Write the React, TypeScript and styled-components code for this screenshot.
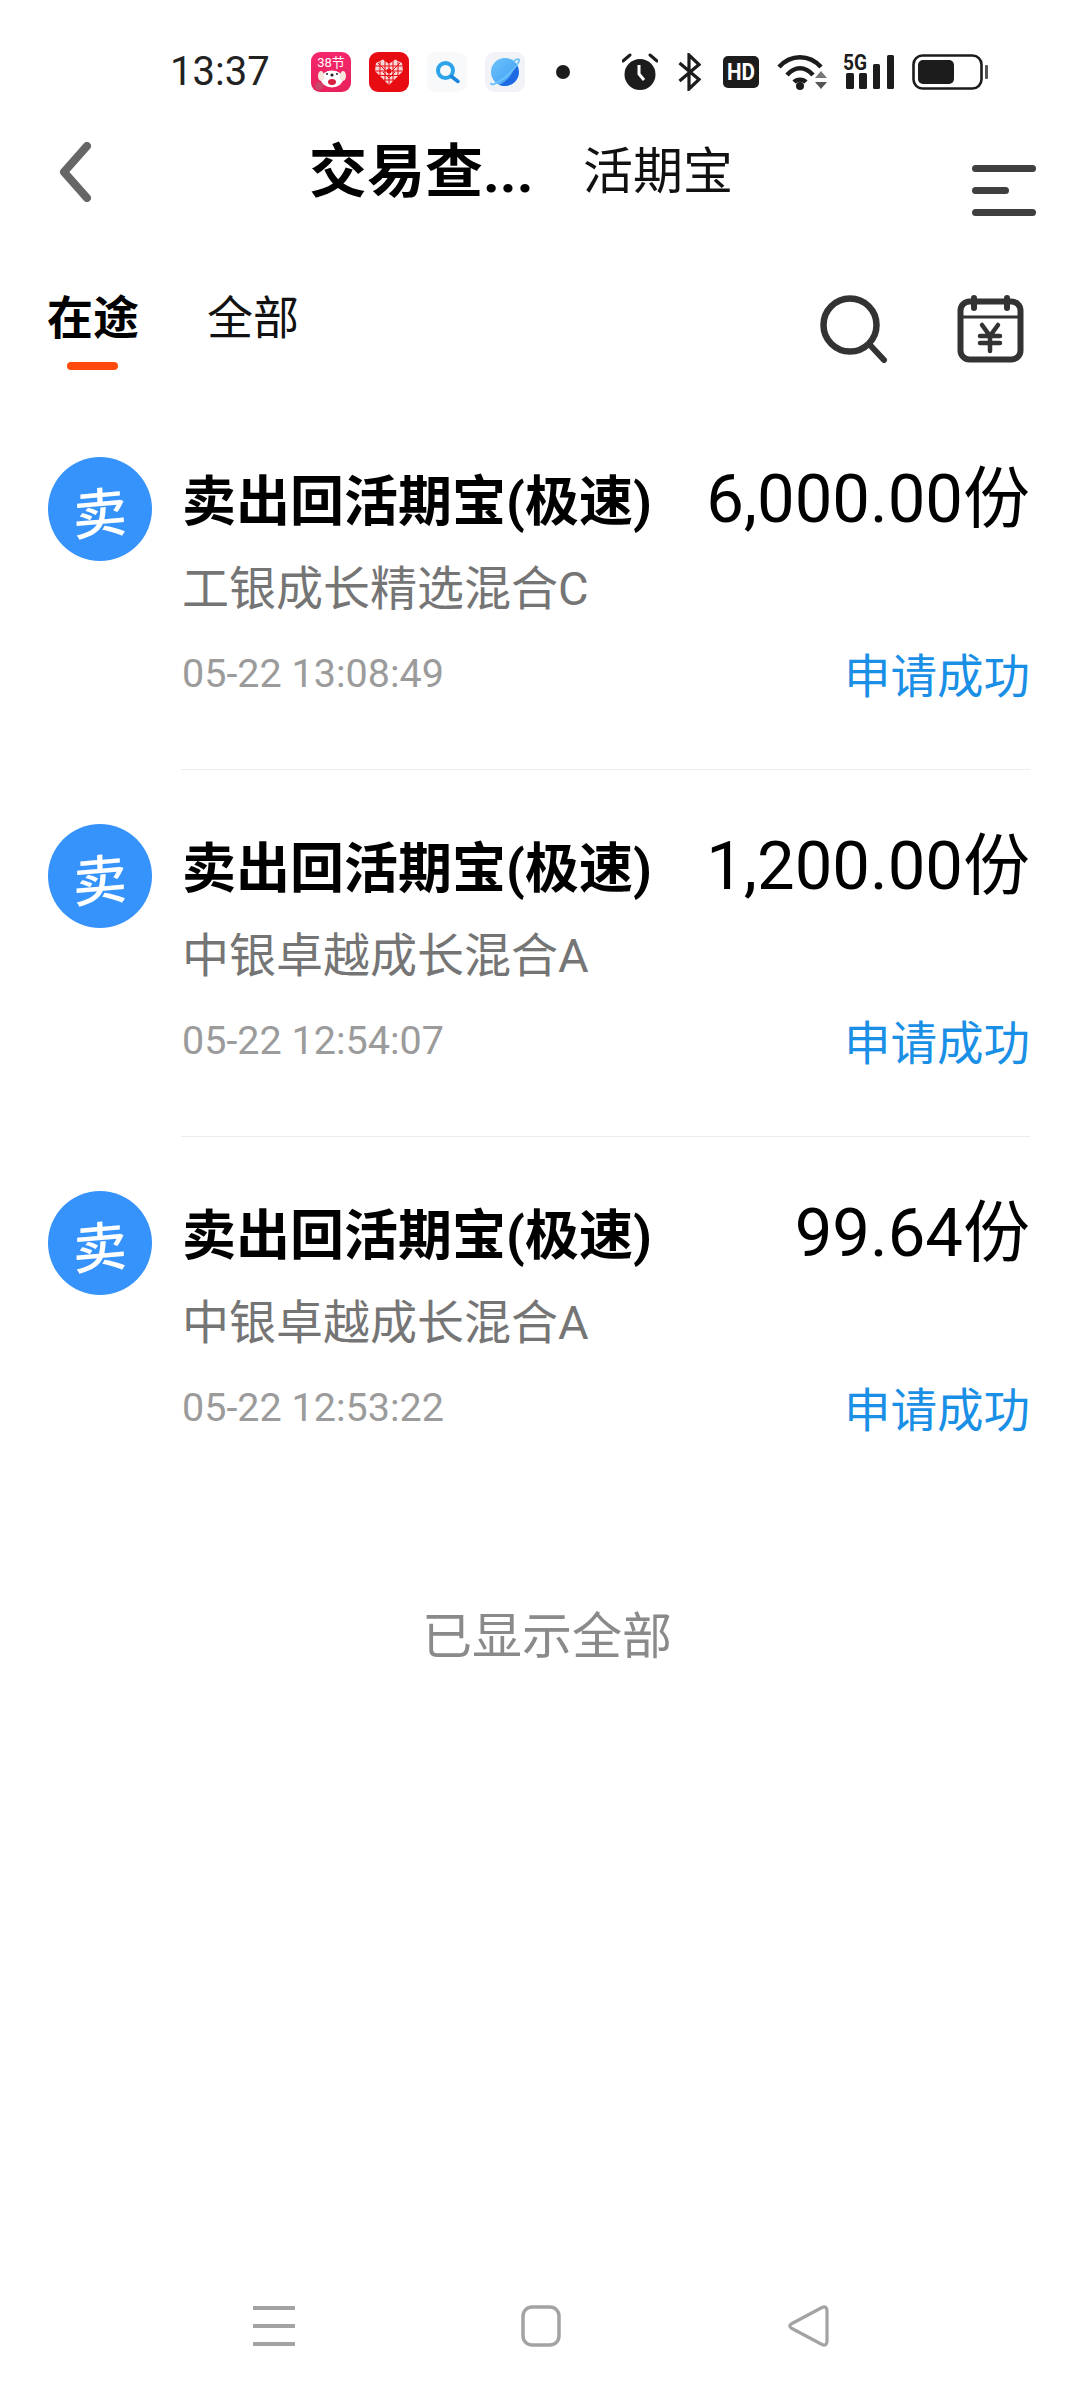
import React from 'react';
import styled, { createGlobalStyle } from 'styled-components';

const GlobalStyle = createGlobalStyle`
  html, body {
    margin: 0;
    padding: 0;
    background: #fff;
  }
  body {
    font-family: Roboto, "Noto Sans CJK SC", sans-serif;
  }
`;

const Page = styled.div`
  width: 1080px;
  min-height: 2400px;
  display: flex;
  flex-direction: column;
  background: #fff;
  color: #000;
`;

const StatusBar = styled.div`
  height: 40px;
  padding: 52px 0 22px 170px;
  display: flex;
  align-items: center;
`;

const Clock = styled.span`
  width: 141px;
  font-size: 40px;
  line-height: 40px;
  color: #222;
  white-space: nowrap;
`;

const AppIcons = styled.div`
  display: flex;
  align-items: center;
  gap: 18px;
  flex: none;
  width: 259px;

  svg {
    flex: none;
  }
`;

const NoticeDot = styled.span`
  width: 14px;
  height: 14px;
  border-radius: 50%;
  background: #1c1c1c;
  margin-left: 13px;
`;

const SystemIcons = styled.div`
  margin-left: 52px;
  display: flex;
  align-items: center;
`;

const SystemIcon = styled.svg<{ $left?: number }>`
  display: block;
  flex: none;
  margin-left: ${(p) => p.$left ?? 0}px;
`;

const NavBar = styled.div`
  height: 116px;
  padding-left: 56px;
  display: flex;
  align-items: center;
  position: relative;
`;

const BackIcon = styled.svg`
  display: block;
  width: 38px;
  height: 60px;
`;

const NavTitle = styled.h1`
  margin: 0 0 0 215px;
  width: 274px;
  font-size: 58px;
  line-height: 70px;
  font-weight: 700;
  white-space: nowrap;
`;

const NavSubtitle = styled.span`
  font-size: 50px;
  line-height: 70px;
  color: #111;
`;

const MenuButton = styled.div`
  margin-left: auto;
  margin-right: 44px;
  margin-top: 36px;
  width: 64px;
  display: flex;
  flex-direction: column;
  gap: 15px;
`;

const MenuLine = styled.span<{ $short?: boolean }>`
  height: 7px;
  border-radius: 3.5px;
  background: #3f3f3f;
  width: ${(p) => (p.$short ? '37px' : '64px')};
`;

const TabBar = styled.div`
  height: 173px;
  padding-left: 47px;
  display: flex;
  align-items: flex-start;
`;

const Tab = styled.div<{ $active?: boolean }>`
  position: relative;
  width: 92px;
  margin-right: 68px;
  margin-top: 60px;
  font-size: 46px;
  line-height: 56px;
  white-space: nowrap;
  font-weight: ${(p) => (p.$active ? 700 : 400)};
  color: ${(p) => (p.$active ? '#000' : '#111')};
`;

const TabMark = styled.span`
  position: absolute;
  left: 20px;
  top: 72px;
  width: 51px;
  height: 8px;
  border-radius: 4px;
  background: #ff4a0c;
`;

const TabTools = styled.div`
  margin-left: auto;
  margin-right: 56px;
  margin-top: 65px;
  display: flex;
  gap: 68px;
`;

const ToolIcon = styled.svg`
  display: block;
  width: 68px;
  height: 68px;
`;

const List = styled.div`
  display: flex;
  flex-direction: column;
`;

const Row = styled.div`
  padding: 54px 50px 54px 48px;
  display: grid;
  grid-template-columns: 134px 1fr;
`;

const Avatar = styled.div`
  width: 104px;
  height: 104px;
  border-radius: 50%;
  background: #3593fb;
  color: #fff;
  display: flex;
  align-items: center;
  justify-content: center;
  font-size: 54px;
  font-weight: 500;
`;

const AvatarGlyph = styled.span`
  display: block;
  transform: rotate(-5deg) skewX(-4deg);
`;

const RowBody = styled.div`
  display: flex;
  flex-direction: column;
`;

const RowLine = styled.div<{ $height: number }>`
  height: ${(p) => p.$height}px;
  display: flex;
  align-items: center;
  justify-content: space-between;
  white-space: nowrap;
`;

const RowTitle = styled.span`
  font-size: 54px;
  font-weight: 700;
`;

const Amount = styled.span`
  font-size: 67px;
  color: #000;
  position: relative;
  top: -5px;
`;

const FundName = styled.span`
  font-size: 47px;
  color: #757575;
`;

const DateText = styled.span`
  font-size: 39.500px;
  color: #9b9b9b;
`;

const StatusText = styled.span`
  font-size: 46.500px;
  color: #1a8fe6;
  position: relative;
  top: -1px;
`;

const Divider = styled.div`
  height: 1px;
  margin: 0 50px 0 181px;
  background: #ececec;
`;

const EndNote = styled.div`
  margin-top: 104px;
  height: 60px;
  line-height: 60px;
  text-align: center;
  font-size: 50px;
  color: #8a8a8a;
  padding-left: 14px;
`;

const BottomNav = styled.div`
  margin-top: auto;
  padding: 0 0 53px 253px;
  display: flex;
  gap: 225px;
`;

const BottomIcon = styled.svg`
  display: block;
  width: 42px;
  height: 42px;
`;

const ROWS = [
  { amount: '6,000.00份', fund: '工银成长精选混合C', time: '05-22 13:08:49' },
  { amount: '1,200.00份', fund: '中银卓越成长混合A', time: '05-22 12:54:07' },
  { amount: '99.64份', fund: '中银卓越成长混合A', time: '05-22 12:53:22' },
];

// mall app: pink tile with a white puppy
function MallApp() {
  return (
    <svg width="40" height="40" viewBox="0 0 40 40">
      <defs>
        <linearGradient id="mall" x1="0" y1="0" x2="0" y2="1">
          <stop offset="0" stopColor="#f5276b" />
          <stop offset="1" stopColor="#e8215c" />
        </linearGradient>
      </defs>
      <rect width="40" height="40" rx="9" fill="url(#mall)" />
      <text x="20" y="15" textAnchor="middle" fontSize="13" fill="#fff" fontFamily="Roboto, 'Noto Sans CJK SC', sans-serif">
        38节
      </text>
      <ellipse cx="21" cy="27" rx="11" ry="8.500" fill="#fff" />
      <ellipse cx="10" cy="24" rx="3" ry="5" fill="#f6e6dc" />
      <ellipse cx="32" cy="24" rx="3" ry="5" fill="#f6e6dc" />
      <ellipse cx="21" cy="30" rx="4" ry="3" fill="#d8203f" />
      <circle cx="21" cy="23" r="1.600" fill="#222" />
      <circle cx="16" cy="22" r="1" fill="#222" />
      <circle cx="26" cy="22" r="1" fill="#222" />
      <circle cx="8" cy="34" r="4" fill="#c9486a" />
    </svg>
  );
}

// red tile with the checkered heart
function HeartApp() {
  return (
    <svg width="40" height="40" viewBox="0 0 40 40">
      <rect width="40" height="40" rx="9" fill="#e70b12" />
      <path d="M20 12 L26 7.500 L33 11 L34 19 L20 33 L6 19 L7 11 L14 7.500 Z" fill="#f8d7d7" />
      <g stroke="#e70b12" strokeWidth="1" fill="none">
        <path d="M11 9.500 V24 M16 8 V29 M20 12 V33 M24 8 V29 M29 9.500 V24" />
        <path d="M6.500 14 H33.500 M6 19 H34 M10 23.500 H30 M15 28 H25" />
        <path d="M9 11 L17 19 M31 11 L23 19 M14 20 L20 26 L26 20" />
      </g>
      <circle cx="20" cy="19" r="2.500" fill="#e70b12" />
    </svg>
  );
}

function SearchApp() {
  return (
    <svg width="40" height="40" viewBox="0 0 40 40">
      <rect width="40" height="40" rx="9" fill="#f8f9fb" />
      <circle cx="18.500" cy="18.500" r="7.500" fill="none" stroke="#2ca3ea" strokeWidth="4" />
      <path d="M24.500 24.500 L31 29.500" stroke="#1b86dc" strokeWidth="3.500" strokeLinecap="round" />
    </svg>
  );
}

function BrowserApp() {
  return (
    <svg width="40" height="40" viewBox="0 0 40 40">
      <defs>
        <linearGradient id="planet" x1="0" y1="0" x2="1" y2="1">
          <stop offset="0" stopColor="#6cc2fb" />
          <stop offset="1" stopColor="#3e9df5" />
        </linearGradient>
      </defs>
      <rect width="40" height="40" rx="9" fill="#f1f3f6" />
      <circle cx="20" cy="20" r="14" fill="url(#planet)" />
      <path d="M31 11.500 A14 14 0 0 1 14 32.700 C22 30 28 22 31 11.500 Z" fill="#1f69e3" />
      <path d="M29 9 C32 6.500 35 6.500 34 9 C33 12 27 20 18 27 C11 32 6 33.500 6 31.500" fill="none" stroke="#6cc2fb" strokeWidth="1.800" strokeLinecap="round" />
    </svg>
  );
}

function App() {
  return (
    <Page>
      <GlobalStyle />
      <StatusBar>
        <Clock>13:37</Clock>
        <AppIcons>
          <MallApp />
          <HeartApp />
          <SearchApp />
          <BrowserApp />
          <NoticeDot />
        </AppIcons>
        <SystemIcons>
          <SystemIcon width="36" height="38" viewBox="0 0 36 38">
            <circle cx="18" cy="21.500" r="15.500" fill="#1c1c1c" />
            <path d="M17 12 V21 L22 27" fill="none" stroke="#fff" strokeWidth="3" />
            <path d="M1 8 L8 2 M35 8 L28 2" stroke="#1c1c1c" strokeWidth="3" strokeLinecap="round" />
          </SystemIcon>
          <SystemIcon $left={20} width="23" height="38" viewBox="0 0 23 38">
            <path d="M1.500 10 L21 26.500 L11 36 V2 L21 11.500 L1.500 28" fill="none" stroke="#1c1c1c" strokeWidth="3.200" />
          </SystemIcon>
          <SystemIcon $left={22} width="36" height="32" viewBox="0 0 36 32">
            <rect width="36" height="32" rx="5" fill="#1c1c1c" />
            <text x="18" y="24" textAnchor="middle" fontSize="23" fontWeight="700" fill="#fff" fontFamily="Roboto, sans-serif" textLength="28" lengthAdjust="spacingAndGlyphs">
              HD
            </text>
          </SystemIcon>
          <SystemIcon $left={18} width="50" height="38" viewBox="0 0 50 38">
            <path d="M2 14 C14 1 32 1 44 14 M10 22 C18 13 28 13 36 22 M17 29 C20 26 26 26 29 29" fill="none" stroke="#1c1c1c" strokeWidth="4.500" />
            <circle cx="23" cy="33" r="4" fill="#1c1c1c" />
            <path d="M38 25 L44 18 L50 25 Z" fill="#777" />
            <path d="M38 29 L50 29 L44 36 Z" fill="#555" />
          </SystemIcon>
          <SystemIcon $left={15} width="52" height="50" viewBox="0 -6 52 50">
            <text x="1" y="17" fontSize="22" fontWeight="700" fill="#1c1c1c" fontFamily="Roboto, sans-serif" textLength="24" lengthAdjust="spacingAndGlyphs">
              5G
            </text>
            <rect x="4" y="20" width="8" height="16" rx="1.500" fill="#1c1c1c" />
            <rect x="17" y="20" width="8" height="16" rx="1.500" fill="#1c1c1c" />
            <rect x="31" y="11" width="7" height="25" rx="1.500" fill="#1c1c1c" />
            <rect x="45" y="2" width="7" height="34" rx="1.500" fill="#1c1c1c" />
          </SystemIcon>
          <SystemIcon $left={18} width="76" height="36" viewBox="0 0 76 36">
            <rect x="1.500" y="1.500" width="68" height="33" rx="9" fill="none" stroke="#1c1c1c" strokeWidth="2.600" />
            <rect x="6" y="6" width="36" height="24" rx="5" fill="#1c1c1c" />
            <rect x="73" y="11" width="3" height="14" rx="1" fill="#555" />
          </SystemIcon>
        </SystemIcons>
      </StatusBar>

      <NavBar>
        <BackIcon viewBox="0 0 38 60">
          <path d="M31 4 L8 30 L31 56" fill="none" stroke="#666" strokeWidth="8" strokeLinecap="round" strokeLinejoin="round" />
        </BackIcon>
        <NavTitle>交易查...</NavTitle>
        <NavSubtitle>活期宝</NavSubtitle>
        <MenuButton>
          <MenuLine />
          <MenuLine $short />
          <MenuLine />
        </MenuButton>
      </NavBar>

      <TabBar>
        <Tab $active>
          在途
          <TabMark />
        </Tab>
        <Tab>全部</Tab>
        <TabTools>
          <ToolIcon viewBox="0 0 68 68">
            <circle cx="30" cy="30" r="26.500" fill="none" stroke="#333" strokeWidth="6.500" />
            <path d="M50 50 L64 65" stroke="#333" strokeWidth="6" strokeLinecap="round" />
          </ToolIcon>
          <ToolIcon viewBox="0 0 68 68">
            <rect x="4.500" y="6.500" width="60" height="58" rx="9" fill="none" stroke="#333" strokeWidth="6" />
            <path d="M4 22 H65" stroke="#333" strokeWidth="3" />
            <path d="M18 3 V13 M51 3 V13" stroke="#333" strokeWidth="6" strokeLinecap="round" />
            <path d="M26 30 L34 41 L42 30 M24 41 H44 M24 48 H44 M34 41 V56" fill="none" stroke="#333" strokeWidth="4.500" strokeLinecap="round" strokeLinejoin="round" />
          </ToolIcon>
        </TabTools>
      </TabBar>

      <List>
        {ROWS.map((row, i) => (
          <React.Fragment key={row.time}>
            {i > 0 && <Divider />}
            <Row>
              <Avatar>
                <AvatarGlyph>卖</AvatarGlyph>
              </Avatar>
              <RowBody>
                <RowLine $height={80}>
                  <RowTitle>卖出回活期宝(极速)</RowTitle>
                  <Amount>{row.amount}</Amount>
                </RowLine>
                <RowLine $height={94}>
                  <FundName>{row.fund}</FundName>
                </RowLine>
                <RowLine $height={84}>
                  <DateText>{row.time}</DateText>
                  <StatusText>申请成功</StatusText>
                </RowLine>
              </RowBody>
            </Row>
          </React.Fragment>
        ))}
      </List>

      <EndNote>已显示全部</EndNote>

      <BottomNav>
        <BottomIcon viewBox="0 0 42 42">
          <path d="M1 3 H41 M1 21 H41 M1 39 H41" stroke="#a3a3a3" strokeWidth="4" strokeLinecap="round" />
        </BottomIcon>
        <BottomIcon viewBox="0 0 42 42">
          <rect x="3" y="2" width="36" height="38" rx="9" fill="none" stroke="#a3a3a3" strokeWidth="3.500" />
        </BottomIcon>
        <BottomIcon viewBox="0 0 42 42">
          <path d="M35 2.500 C38 1 40 2.500 40 6 V36 C40 39.500 38 41 35 39.500 L5 23.500 C2 22 2 20 5 18.500 Z" fill="none" stroke="#a3a3a3" strokeWidth="3.200" />
        </BottomIcon>
      </BottomNav>
    </Page>
  );
}

export default App;
